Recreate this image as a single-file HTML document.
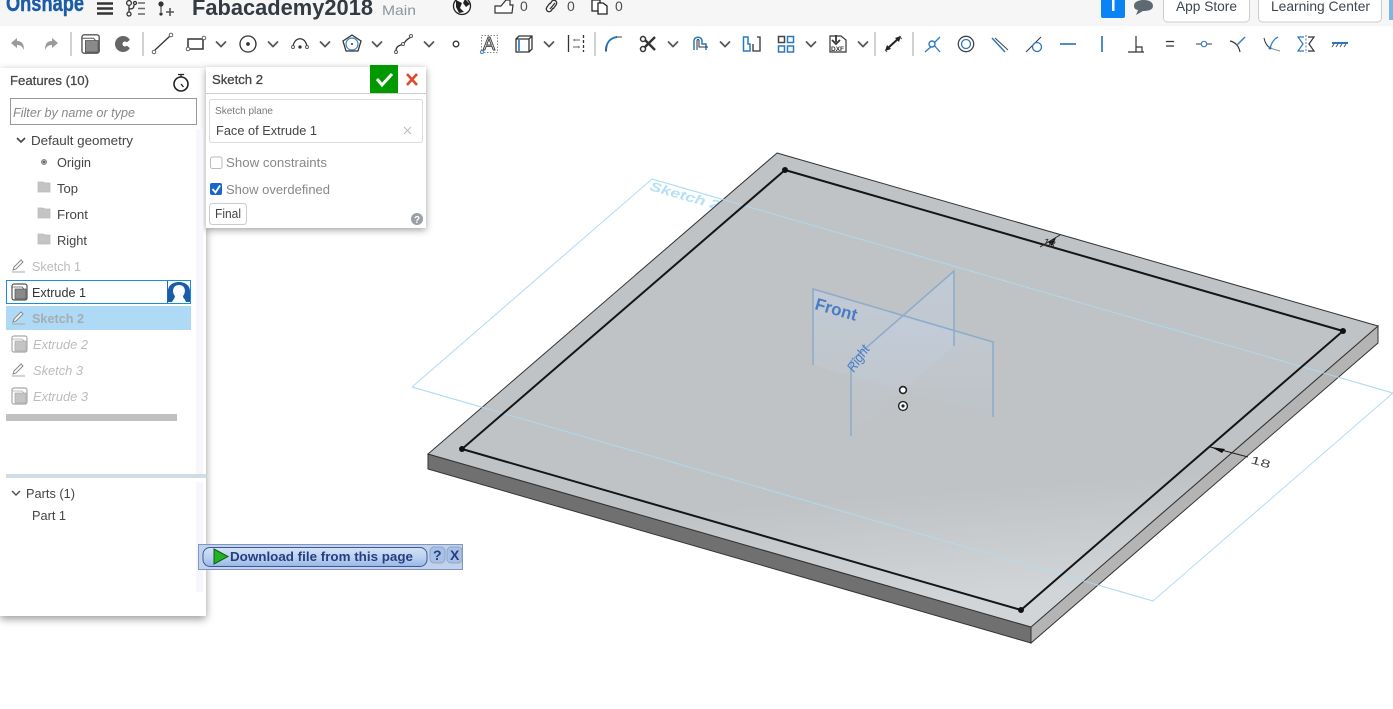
<!DOCTYPE html>
<html><head><meta charset="utf-8"><style>
html,body{margin:0;padding:0;background:#fff;width:1393px;height:709px;overflow:hidden}
svg{position:absolute;left:0;top:0}
text{font-family:"Liberation Sans",sans-serif;font-size:13px;fill:#444}
.p{position:absolute;background:#fff}
</style></head><body>
<svg width="1393" height="709" viewBox="0 0 1393 709">
<defs>
<linearGradient id="g" x1="0" y1="0" x2="0.15" y2="1"><stop offset="0" stop-color="#bfc3c6"/><stop offset=".78" stop-color="#bfc3c6"/><stop offset="1" stop-color="#d2d5d7"/></linearGradient>
<linearGradient id="pl" x1="0" y1="0" x2="0" y2="1"><stop offset="0" stop-color="#c3d0e2" stop-opacity=".55"/><stop offset="1" stop-color="#c3d0e2" stop-opacity="0"/></linearGradient>
</defs>
<path d="M412 387L652 179L1393 393M412 387L1153 601L1393 393" fill="none" stroke="#aedcf5" stroke-width="1"/>
<text transform="translate(649 190) rotate(16)" textLength="72" lengthAdjust="spacingAndGlyphs" style="font-size:13px;font-style:italic;font-weight:bold;fill:#b5e0f7">Sketch 2</text>
<path d="M428 454L1031 627V643L428 469Z" fill="#707070" stroke="#333" stroke-width="1"/>
<path d="M1031 627L1378 326V343L1031 643Z" fill="#b4b4b4" stroke="#333" stroke-width="1"/>
<path d="M777 153L1378 326L1031 627L428 454Z" fill="url(#g)" stroke="#333" stroke-width="1"/>
<path d="M412 387L1153 601M652 179L1393 393" fill="none" stroke="#aedcf5" stroke-width="1" opacity=".85"/>
<path d="M785 170L1343 331L1021 610L462 449Z" fill="none" stroke="#151515" stroke-width="2"/>
<circle cx="785" cy="170" r="3" fill="#111"/><circle cx="1343" cy="331" r="3" fill="#111"/><circle cx="1021" cy="610" r="3" fill="#111"/><circle cx="462" cy="449" r="3" fill="#111"/>
<path d="M851 361L954 271V346L851 436Z" fill="url(#pl)"/>
<path d="M813 289L993 342V417L813 365Z" fill="url(#pl)"/>
<path d="M813 365V289L993 342V417M851 436V361L954 271V346" fill="none" stroke="#8facc9" stroke-width="1.6"/>
<text transform="translate(814 309) rotate(16)" textLength="43" lengthAdjust="spacingAndGlyphs" style="font-size:17px;fill:#4a7cc4;font-weight:bold">Front</text>
<text transform="translate(854 373) rotate(-56)" textLength="29" lengthAdjust="spacingAndGlyphs" style="font-size:14px;font-style:italic;fill:#4a7cc4" >Right</text>
<circle cx="903" cy="390" r="3.4" fill="#fff" stroke="#222" stroke-width="1.6"/>
<circle cx="903" cy="406" r="4.4" fill="#fff" stroke="#222" stroke-width="1.4"/><circle cx="903" cy="406" r="1.6" fill="#222"/>
<path d="M1040 247L1060 235" stroke="#222" stroke-width="1"/><path d="M1048 242L1056 238L1052 246Z" fill="#111"/>
<text transform="translate(1042 245) rotate(16)" style="font-size:11px;font-style:italic;fill:#333">18</text>
<path d="M1210 447L1248 457" stroke="#222" stroke-width="1"/><path d="M1211 447L1225 449L1222 453Z" fill="#111"/>
<text transform="translate(1250 463) rotate(16)" textLength="20" lengthAdjust="spacingAndGlyphs" style="font-size:11px;fill:#444">18</text>
</svg>

<div class="p" style="left:0;top:68px;width:206px;height:548px;box-shadow:0 3px 8px rgba(0,0,0,.4)"></div>
<div class="p" style="left:206px;top:67px;width:220px;height:161px;box-shadow:0 2px 7px rgba(0,0,0,.38)"></div>
<div class="p" style="left:0;top:0;width:1393px;height:26px;background:#f6f6f6"></div>
<div class="p" style="left:0;top:26px;width:1393px;height:34px"></div>

<svg width="1393" height="709" viewBox="0 0 1393 709">
<defs>
<g id="chev"><path d="M-5 -2.500L0 2.500L5 -2.500" fill="none" stroke="#555" stroke-width="1.700"/></g>
<g id="ext"><rect x="-7" y="-8" width="15" height="16" rx="2" fill="#fff" stroke="#555" stroke-width="1.200"/><path d="M-7 -5H3L5 -3" fill="none" stroke="#555" stroke-width=".8"/><rect x="-4" y="-3" width="11" height="10" fill="#8a8a8a" stroke="#555" stroke-width=".7"/></g>
<g id="extf" opacity=".5"><use href="#ext"/></g>
<g id="pen"><path d="M-6 4L-5 1L2 -6L4 -4L-3 3Z" fill="#fff" stroke="#888" stroke-width="1"/><path d="M-7 6H6" stroke="#aaa" stroke-width="1"/></g>
<g id="fold"><path d="M-6 -5H-1L1 -4H6V5H-6Z" fill="#c4c4c4" stroke="#bbb" stroke-width=".8"/></g>
</defs>

<!-- top bar -->
<text x="6" y="11" textLength="78" lengthAdjust="spacingAndGlyphs" style="font-size:23px;font-weight:bold;fill:#1b5ca8;stroke:#1b5ca8;stroke-width:.4">Onshape</text>
<path d="M97 3.500H113M97 8.500H113M97 13.500H113" stroke="#333" stroke-width="2.400"/>
<g fill="none" stroke="#333" stroke-width="1.300"><circle cx="129" cy="3" r="2.400"/><circle cx="129" cy="14" r="2"/><path d="M129 5V12M129 9C133 9 134 8 134 5"/><circle cx="135" cy="3" r="1.500"/><path d="M138 3H145M138 8.500H145M138 14H145" stroke="#666" stroke-width="1.600"/></g>
<circle cx="161" cy="4" r="2.600" fill="#333"/><circle cx="161" cy="14" r="1.600" fill="#333"/><path d="M161 6V12" stroke="#333"/><path d="M166 12H174M170 8V16" stroke="#555" stroke-width="1.600"/>
<text x="192" y="15" textLength="181" lengthAdjust="spacingAndGlyphs" style="font-size:22px;font-weight:bold;fill:#333a42">Fabacademy2018</text>
<text x="382" y="15" textLength="34" lengthAdjust="spacingAndGlyphs" style="font-size:14px;fill:#8c959e">Main</text>
<circle cx="462" cy="6" r="8.500" fill="#fff" stroke="#222" stroke-width="1.300"/><path d="M456 0L462 3L460 8L464 12L459 13L456 7ZM465 -1L470 4L466 7L463 3Z" fill="#222"/>
<path d="M495 6H501L506 0H510V5H513L512 13H495Z" fill="#fff" stroke="#333" stroke-width="1.200"/>
<text x="520" y="11" style="font-size:14px;fill:#4a4f55">0</text>
<path d="M550 3L547 7C545 10 548 13 551 11L553 8M553 9L556 5C558 2 555 -1 552 1L550 4M550 9L555 3" fill="none" stroke="#333" stroke-width="1.300"/>
<text x="567" y="11" style="font-size:14px;fill:#4a4f55">0</text>
<path d="M592 0H600V11H592Z" fill="#fff" stroke="#222" stroke-width="1.300"/><path d="M598 3H603L607 6V14H598Z" fill="#fff" stroke="#222" stroke-width="1.300"/>
<text x="615" y="11" style="font-size:14px;fill:#4a4f55">0</text>
<rect x="1101" y="-4" width="24" height="22" rx="2" fill="#0a84f5"/><rect x="1112" y="0" width="2.500" height="11" fill="#fff"/>
<path d="M1134 6C1134 1 1140 0 1144 0C1149 0 1153 2 1153 6C1153 10 1148 11 1143 11L1136 15L1138 10C1135 9.500 1134 8 1134 6Z" fill="#5e6a72"/>
<rect x="1163.500" y="-6" width="86" height="28" rx="4" fill="#fff" stroke="#ccc"/>
<text x="1176" y="11" textLength="61" lengthAdjust="spacingAndGlyphs" style="font-size:14px;fill:#3e4650">App Store</text>
<rect x="1258.500" y="-6" width="123" height="28" rx="4" fill="#fff" stroke="#ccc"/>
<text x="1271" y="11" textLength="99" lengthAdjust="spacingAndGlyphs" style="font-size:14px;fill:#3e4650">Learning Center</text>
<rect x="1389" y="0" width="4" height="20" fill="#7eb4e0"/>

<!-- toolbar -->
<g fill="none" stroke="#d2d2d2" stroke-width="2"><path d="M71 32V56M143 32V56M595 32V56M875 32V56M913 32V56"/></g>
<path d="M11 43L17 38V41C22 41 24 44 24 50C22 46 20 45 17 45V48Z" fill="#9a9a9a"/>
<path d="M58 43L52 38V41C47 41 45 44 45 50C47 46 49 45 52 45V48Z" fill="#9a9a9a"/>
<use href="#ext" transform="translate(90 44) scale(1.150)"/>
<circle cx="123" cy="44" r="8" fill="#666"/><path d="M132 38L125 44L132 50Z" fill="#fff"/><circle cx="125" cy="44" r="2.500" fill="#fff"/>
<g fill="none" stroke="#333" stroke-width="1.300">
<path d="M155 50L170 36"/><rect x="188" y="39" width="15" height="10" stroke-width="1.500"/>
<circle cx="248" cy="44" r="8"/><circle cx="248" cy="44" r="1.200" fill="#333"/>
<path d="M293 47C294 36 306 36 307 47"/><circle cx="300" cy="47" r="1" fill="#333"/>
<path d="M352 35L361 41L358 51H346L343 41Z"/>
<path d="M396 51C396 44 403 46 405 42C406 40 408 39 411 37"/>
<circle cx="456" cy="44" r="2.800"/>
<path d="M516 39L519 36H532V49L529 52H516ZM516 39H529V52M529 39L532 36"/>
<path d="M568.500 35V52"/><path d="M583.500 35V52" stroke-dasharray="3 2"/>
</g>
<g fill="#fff" stroke="#555" stroke-width=".9"><circle cx="154" cy="52" r="1.800"/><circle cx="171" cy="35" r="1.800"/><circle cx="188" cy="49" r="1.800"/><circle cx="204" cy="38" r="1.800"/><circle cx="293" cy="47" r="1.500"/><circle cx="307" cy="47" r="1.500"/><circle cx="396" cy="52" r="1.500"/><circle cx="403" cy="44" r="1.500"/><circle cx="411" cy="36" r="1.500"/></g>
<circle cx="352" cy="44" r="6" fill="none" stroke="#3a80c4" stroke-width="1.200"/><circle cx="352" cy="44" r="1" fill="#333"/>
<use href="#chev" x="221" y="44"/><use href="#chev" x="273" y="44"/><use href="#chev" x="325" y="44"/><use href="#chev" x="377" y="44"/><use href="#chev" x="429" y="44"/><use href="#chev" x="549" y="44"/><use href="#chev" x="673" y="44"/><use href="#chev" x="725" y="44"/><use href="#chev" x="811" y="44"/><use href="#chev" x="863" y="44"/>
<rect x="481.500" y="35.500" width="16" height="17" fill="none" stroke="#888" stroke-dasharray="1.500 1.500"/>
<text x="483" y="50" style="font-size:18px;fill:#fff;stroke:#444;stroke-width:1">A</text>
<circle cx="482" cy="52" r="1.500" fill="#fff" stroke="#3a80c4"/>
<path d="M519 39V52" stroke="#3a80c4" stroke-width="1.800"/>
<path d="M573 40H580M573 47H580" stroke="#888" stroke-width="1.200"/><path d="M573 40L575 38.500V41.500ZM580 47L578 45.500V48.500Z" fill="#888"/>
<path d="M606 51C606 43 610 38 617 37" fill="none" stroke="#2a78bd" stroke-width="2"/><path d="M606 46V52M616 37H622" stroke="#444" fill="none"/>
<path d="M642 37L655 50M655 37L642 50" stroke="#333" stroke-width="2.400"/><circle cx="643" cy="39" r="2.500" fill="#fff" stroke="#333" stroke-width="1.500"/><circle cx="643" cy="49" r="2.500" fill="#fff" stroke="#333" stroke-width="1.500"/>
<path d="M694 50V41C694 36 702 36 702 41V44H706V50" fill="none" stroke="#2a78bd" stroke-width="1.500"/><path d="M697 50V41C697 39 699 39 699 41V47H708" fill="none" stroke="#333" stroke-width="1"/>
<path d="M743.500 37H748V44H750V51H743.500Z" fill="none" stroke="#2a78bd" stroke-width="1.500"/><path d="M753 44V51H760V37H757" fill="none" stroke="#333" stroke-width="1.300"/>
<g fill="none" stroke="#2a78bd" stroke-width="1.500"><rect x="778.500" y="36.500" width="6" height="6" stroke="#444"/><rect x="787.500" y="36.500" width="6" height="6"/><rect x="778.500" y="46" width="6" height="6"/><rect x="787.500" y="46" width="6" height="6"/></g>
<path d="M830 36H841L846 40V52H830Z" fill="#fff" stroke="#333" stroke-width="1.200"/><path d="M836 35V42M832 40L836 44L840 40" stroke="#333" stroke-width="1.800" fill="none"/><text x="831" y="51" style="font-size:6.500px;font-weight:bold;fill:#333">DXF</text>
<path d="M887 49L899 38" stroke="#222" stroke-width="2"/><path d="M885 51L887 45L891 49ZM901 36L895 38L899 42Z" fill="#222"/><path d="M887 52L885 50M899 36L902 39" stroke="#555"/>
<!-- constraints -->
<path d="M925 52L933 45" stroke="#2a78bd" stroke-width="1.300"/><path d="M933 44L940 37M933 44L940 52" fill="none" stroke="#2a78bd" stroke-width="1.300"/><circle cx="932" cy="44" r="3" fill="#fff" stroke="#2a78bd" stroke-width="1.400"/>
<circle cx="966" cy="44" r="7.700" fill="none" stroke="#444" stroke-width="1.300"/><circle cx="966" cy="44" r="4.500" fill="none" stroke="#2a78bd" stroke-width="1.300"/>
<path d="M992 38L1005 52" stroke="#2a78bd" stroke-width="1.500"/><path d="M995 38L1008 50" stroke="#444"/>
<path d="M1026 52L1041 37" stroke="#333"/><circle cx="1037" cy="47" r="4.500" fill="none" stroke="#2a78bd" stroke-width="1.300"/>
<path d="M1060 44H1076" stroke="#3a80c4" stroke-width="1.800"/><path d="M1102 36V52" stroke="#3a80c4" stroke-width="1.800"/>
<path d="M1136 36V52M1128 52H1144M1136 47H1142V52" fill="none" stroke="#333" stroke-width="1.200"/>
<path d="M1166 41.500H1174M1166 46H1174" stroke="#333" stroke-width="1.300"/>
<path d="M1196 44H1212" stroke="#888" stroke-width="1.600"/><circle cx="1204" cy="44" r="2.700" fill="#fff" stroke="#3a80c4" stroke-width="1.200"/>
<path d="M1230 41C1235 42 1239 46 1240 52" fill="none" stroke="#333" stroke-width="1.200"/><path d="M1237 45L1245 37" stroke="#3a80c4" stroke-width="1.500"/>
<path d="M1264 38C1265 43 1267 46 1270 48" fill="none" stroke="#333"/><path d="M1270 48C1272 42 1274 39 1278 37" fill="none" stroke="#3a80c4" stroke-width="1.300"/><path d="M1270 48C1273 49 1276 50 1280 51" stroke="#888" fill="none"/><circle cx="1270" cy="48" r="1.500" fill="#2a78bd"/>
<path d="M1306 35V53" stroke="#3a80c4" stroke-dasharray="2 1.500"/><path d="M1304 37H1298L1303 44L1298 51H1304" fill="none" stroke="#2a78bd" stroke-width="1.200"/><path d="M1308 37H1314L1309 44L1314 51H1308" fill="none" stroke="#333" stroke-width="1.200"/>
<path d="M1332 43H1348" stroke="#2a78bd" stroke-width="2"/><path d="M1334 44L1332 47M1338 44L1336 47M1342 44L1340 47M1346 44L1344 47" stroke="#555"/>

<!-- features panel -->
<text x="10" y="85" textLength="79" lengthAdjust="spacingAndGlyphs" style="fill:#444;stroke:#444;stroke-width:.25">Features (10)</text>
<circle cx="181" cy="84" r="7" fill="#fff" stroke="#222" stroke-width="1.600"/><path d="M178 74.500H184M181 75V77M181 84L183.500 87" stroke="#222" stroke-width="1.300"/>
<rect x="10.500" y="98.500" width="186" height="26" fill="#fff" stroke="#999"/>
<text x="13" y="117" textLength="122" lengthAdjust="spacingAndGlyphs" style="font-style:italic;fill:#888">Filter by name or type</text>
<rect x="196" y="129" width="7" height="345" fill="#f6f7fa"/>
<rect x="196" y="482" width="7" height="110" fill="#f6f7fa"/>
<path d="M17 138L21 142L25 138" fill="none" stroke="#444" stroke-width="1.600"/>
<text x="31" y="145" textLength="102" lengthAdjust="spacingAndGlyphs">Default geometry</text>
<circle cx="44" cy="162" r="2.500" fill="#aaa" stroke="#888"/><circle cx="44" cy="162" r="1" fill="#555"/>
<text x="57" y="167" textLength="34" lengthAdjust="spacingAndGlyphs">Origin</text>
<use href="#fold" x="44" y="187"/><text x="57" y="193" textLength="21" lengthAdjust="spacingAndGlyphs">Top</text>
<use href="#fold" x="44" y="213"/><text x="57" y="219" textLength="31" lengthAdjust="spacingAndGlyphs">Front</text>
<use href="#fold" x="44" y="239"/><text x="57" y="245" textLength="30" lengthAdjust="spacingAndGlyphs">Right</text>
<use href="#pen" x="19" y="266"/><text x="32" y="271" textLength="49" lengthAdjust="spacingAndGlyphs" style="fill:#bbb">Sketch 1</text>
<rect x="6.500" y="280.500" width="184" height="23" fill="#fff" stroke="#1a8ce8"/><path d="M167.500 281V303" stroke="#1a6cc0"/>
<use href="#ext" x="19" y="292"/>
<text x="32" y="297" textLength="54" lengthAdjust="spacingAndGlyphs" style="fill:#333">Extrude 1</text>
<path d="M168 302V291C168 279 190 279 190 291V302H186C185 299 183 298 183 296C186 293 186 285 179 285C172 285 172 293 175 296C175 298 173 300 172 302Z" fill="#1a5ca8"/>
<rect x="6" y="306" width="185" height="24" fill="#aedaf5"/>
<use href="#pen" x="19" y="318"/><text x="32" y="323" textLength="52" lengthAdjust="spacingAndGlyphs" style="font-weight:bold;fill:#a5adb2">Sketch 2</text>
<use href="#extf" x="19" y="344"/><text x="33" y="349" textLength="55" lengthAdjust="spacingAndGlyphs" style="font-style:italic;fill:#bbb">Extrude 2</text>
<use href="#pen" x="19" y="370"/><text x="33" y="375" textLength="50" lengthAdjust="spacingAndGlyphs" style="font-style:italic;fill:#bbb">Sketch 3</text>
<use href="#extf" x="19" y="396"/><text x="33" y="401" textLength="55" lengthAdjust="spacingAndGlyphs" style="font-style:italic;fill:#bbb">Extrude 3</text>
<rect x="6" y="414" width="171" height="7" fill="#c0c0c0"/>
<rect x="6" y="474" width="200" height="4" fill="#d0dde6"/>
<path d="M12 491L16 495L20 491" fill="none" stroke="#555" stroke-width="1.500"/>
<text x="26" y="498" textLength="49" lengthAdjust="spacingAndGlyphs">Parts (1)</text>
<text x="32" y="520" textLength="34" lengthAdjust="spacingAndGlyphs">Part 1</text>

<!-- sketch dialog -->
<text x="212" y="84" textLength="51" lengthAdjust="spacingAndGlyphs" style="fill:#444;stroke:#444;stroke-width:.3">Sketch 2</text>
<rect x="370" y="65" width="28" height="28" fill="#009a00"/>
<path d="M377 79L382 85L392 74" fill="none" stroke="#fff" stroke-width="3"/>
<path d="M407 74L417 85M417 74L407 85" stroke="#e0492a" stroke-width="2.600"/>
<path d="M206 93.500H426" stroke="#ccc"/>
<rect x="209.500" y="99.500" width="213" height="43" rx="2" fill="#fff" stroke="#ddd"/>
<text x="215" y="114" textLength="58" lengthAdjust="spacingAndGlyphs" style="font-size:10px;fill:#777">Sketch plane</text>
<text x="216" y="135" textLength="101" lengthAdjust="spacingAndGlyphs">Face of Extrude 1</text>
<path d="M404 127L411 134M411 127L404 134" stroke="#bbb"/>
<rect x="210.500" y="157" width="11.500" height="11.500" rx="2" fill="#fff" stroke="#bbb"/>
<text x="226" y="167" textLength="101" lengthAdjust="spacingAndGlyphs" style="fill:#888">Show constraints</text>
<rect x="210" y="183" width="12" height="12" rx="2" fill="#1a66c8"/><path d="M212.500 189L215.500 192.500L220 185.500" fill="none" stroke="#fff" stroke-width="1.800"/>
<text x="226" y="194" textLength="104" lengthAdjust="spacingAndGlyphs" style="fill:#888">Show overdefined</text>
<rect x="209.500" y="203.500" width="37" height="21" rx="3" fill="#fff" stroke="#ccc"/>
<text x="215" y="218" textLength="26" lengthAdjust="spacingAndGlyphs">Final</text>
<circle cx="417" cy="219" r="6" fill="#9aa0a6"/><text x="414" y="223" style="font-size:10px;font-weight:bold;fill:#fff">?</text>

<!-- download bar -->
<defs><linearGradient id="db" x1="0" y1="0" x2="0" y2="1"><stop offset="0" stop-color="#d4e1f4"/><stop offset=".5" stop-color="#bcd2f2"/><stop offset="1" stop-color="#9ab6e4"/></linearGradient></defs>
<rect x="198.500" y="544.500" width="264" height="25" fill="#c2d2ec" stroke="#7e96c0"/>
<rect x="203" y="547.500" width="224" height="19" rx="7" fill="url(#db)" stroke="#3e5a94"/>
<path d="M214 549L228 556.500L214 564Z" fill="#22b322" stroke="#0e5e1a"/>
<text x="230" y="561" textLength="183" lengthAdjust="spacingAndGlyphs" style="font-weight:bold;fill:#243f80">Download file from this page</text>
<rect x="430" y="547" width="15" height="16" rx="4" fill="#a9c0e6" stroke="#8ea6cc"/><text x="433" y="560" style="font-size:14px;font-weight:bold;fill:#243f80">?</text>
<rect x="447" y="547" width="15" height="16" rx="4" fill="#a9c0e6" stroke="#8ea6cc"/><text x="450" y="560" style="font-size:14px;font-weight:bold;fill:#243f80">X</text>
</svg>
</body></html>
